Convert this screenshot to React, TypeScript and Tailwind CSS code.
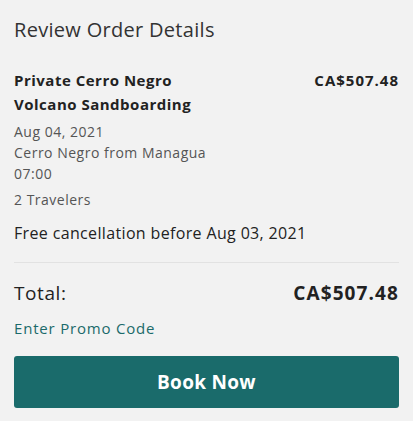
export default function App() {
  return (
    <div
      className="min-h-[421px] w-full bg-[#f2f2f2] px-[14px] pt-[17px] text-[#2b2b2b]"
      style={{ fontFamily: '"Open Sans", "Noto Sans", sans-serif' }}
    >
      <h2 className="text-[20px] leading-[26px] tracking-[0.3px] text-[#333]">Review Order Details</h2>

      <div className="mt-[25px] flex justify-between gap-4">
        <div className="text-[15px] font-bold leading-[24px] tracking-[0.5px] text-[#222]">
          Private Cerro Negro
          <br />
          Volcano Sandboarding
        </div>
        <div className="text-[15px] font-bold leading-[24px] tracking-[1px] text-[#222]">CA$507.48</div>
      </div>

      <div className="mt-[5px] text-[14px] leading-[21px] tracking-[0.5px] text-[#555]">
        <div>Aug 04, 2021</div>
        <div>Cerro Negro from Managua</div>
        <div>07:00</div>
        <div className="mt-[5px]">2 Travelers</div>
      </div>

      <div className="mt-[12px] text-[16px] leading-[22px] tracking-[0.35px] text-[#222]">
        Free cancellation before Aug 03, 2021
      </div>

      <div className="mt-[18px] border-t border-[#e2e2e2]" />

      <div className="mt-[17px] flex items-center justify-between">
        <span className="text-[19px] leading-[26px] tracking-[0.6px] text-[#222]">Total:</span>
        <span className="text-[19px] font-bold leading-[26px] tracking-[1.1px] text-[#222]">CA$507.48</span>
      </div>

      <div className="mt-[12px] text-[15px] leading-[20px] tracking-[0.8px] text-[#1b6a6a]">Enter Promo Code</div>

      <button className="mt-[18px] flex h-[52px] w-full items-center justify-center rounded-[3px] bg-[#1a6b6b] text-[19px] font-bold tracking-[0.3px] text-white">
        Book Now
      </button>
    </div>
  );
}
